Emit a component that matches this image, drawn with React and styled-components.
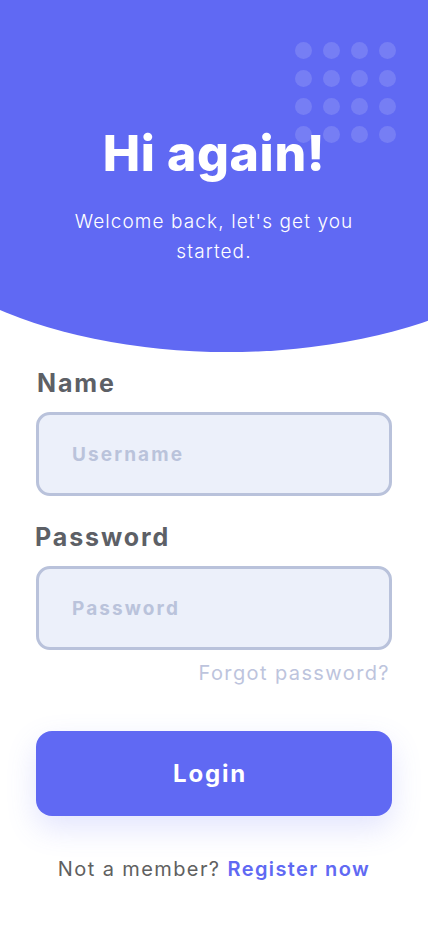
import React from "react";
import styled, { createGlobalStyle } from "styled-components";

const GlobalStyle = createGlobalStyle`
  * { box-sizing: border-box; }
  html, body {
    margin: 0;
    padding: 0;
    background: #ffffff;
    font-family: "Inter", "Open Sans", sans-serif;
  }
`;

const Page = styled.div`
  width: 428px;
  min-height: 926px;
  overflow: hidden;
  display: flex;
  flex-direction: column;
  background: #ffffff;
`;

// wider than the screen so the bottom edge reads as a shallow arc
const Hero = styled.header`
  position: relative;
  margin: 0 -150px 0 -122px;
  height: 352px;
  padding: 0 150px 0 122px;
  background: #6069f3;
  border-radius: 0 0 50% 50% / 0 0 174px 174px;
  display: flex;
  flex-direction: column;
  align-items: center;
`;

const Dots = styled.div`
  position: absolute;
  top: 42px;
  left: 417px;
  display: grid;
  grid-template-columns: repeat(4, 17px);
  gap: 11px;
`;

const Dot = styled.span`
  width: 17px;
  height: 17px;
  border-radius: 50%;
  background: rgba(255, 255, 255, 0.14);
`;

const Title = styled.h1`
  position: relative;
  margin: 121px 0 0;
  font-size: 50px;
  line-height: 64px;
  font-weight: 800;
  color: #ffffff;
  letter-spacing: 0.6px;
`;

const Subtitle = styled.p`
  position: relative;
  margin: 22px 0 0;
  width: 300px;
  text-align: center;
  font-size: 19px;
  line-height: 30px;
  font-weight: 300;
  color: #ffffff;
  letter-spacing: 1.1px;
`;

const Form = styled.form`
  display: flex;
  flex-direction: column;
  padding: 16px 36px 0;
`;

const Label = styled.label`
  font-size: 25px;
  line-height: 30px;
  font-weight: 700;
  color: #5d6066;
  letter-spacing: 1.9px;
  margin: ${(p) => p.$top || 0}px 0 0 ${(p) => p.$left ?? 1}px;
`;

const Input = styled.input`
  margin-top: 14px;
  width: 100%;
  height: 84px;
  border: 3px solid #b9c2db;
  border-radius: 14px;
  background: #ecf0fa;
  padding: 0 0 0 33px;
  font-family: inherit;
  font-size: 19px;
  font-weight: 700;
  color: #5d6066;
  letter-spacing: 2.1px;
  outline: none;

  &::placeholder {
    color: #bac3db;
  }
`;

const Forgot = styled.a`
  align-self: flex-end;
  margin: 10px 2px 0 0;
  font-size: 20px;
  line-height: 26px;
  font-weight: 400;
  color: #bdc4dd;
  letter-spacing: 1.4px;
  text-decoration: none;
`;

const LoginButton = styled.button`
  margin-top: 45px;
  width: 100%;
  height: 85px;
  border: none;
  border-radius: 16px;
  background: #6069f3;
  box-shadow: 0 12px 30px rgba(96, 105, 243, 0.18);
  color: #ffffff;
  font-family: inherit;
  font-size: 24px;
  font-weight: 700;
  letter-spacing: 1.8px;
  padding: 0 8px 0 0;
  cursor: pointer;
`;

const Footer = styled.p`
  margin: 40px 0 0;
  text-align: center;
  font-size: 20px;
  line-height: 26px;
  color: #606060;
  letter-spacing: 1.4px;
`;

const Register = styled.a`
  color: #6069f3;
  font-weight: 600;
  text-decoration: none;
`;

export default function App() {
  return (
    <Page>
      <GlobalStyle />
      <Hero>
        <Dots>
          {Array.from({ length: 16 }).map((_, i) => (
            <Dot key={i} />
          ))}
        </Dots>
        <Title>Hi again!</Title>
        <Subtitle>Welcome back, let's get you started.</Subtitle>
      </Hero>
      <Form onSubmit={(e) => e.preventDefault()}>
        <Label htmlFor="username">Name</Label>
        <Input id="username" placeholder="Username" />
        <Label htmlFor="password" $top={26} $left={-1}>
          Password
        </Label>
        <Input id="password" type="password" placeholder="Password" />
        <Forgot href="#">Forgot password?</Forgot>
        <LoginButton type="submit">Login</LoginButton>
        <Footer>
          Not a member? <Register href="#">Register now</Register>
        </Footer>
      </Form>
    </Page>
  );
}
